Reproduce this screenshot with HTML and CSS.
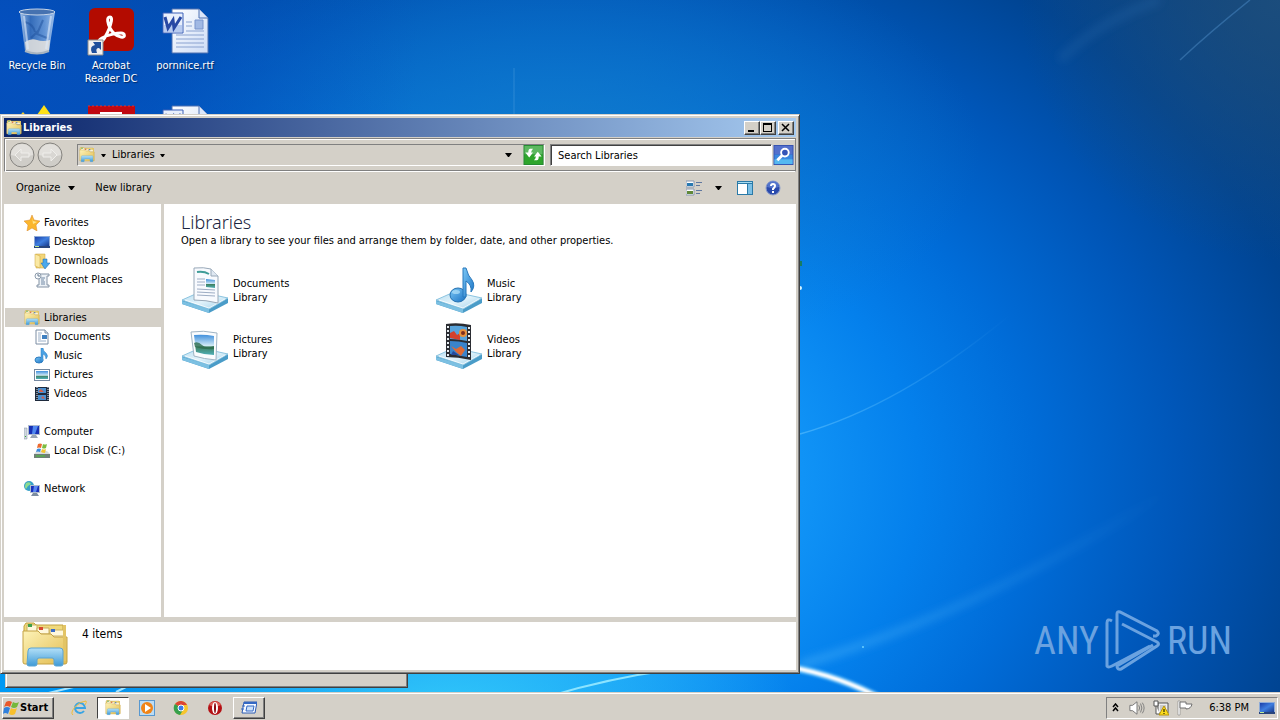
FILE: index.html
```html
<!DOCTYPE html>
<html lang="en">
  <head>
    <meta charset="UTF-8" />
    <meta name="viewport" content="width=device-width, initial-scale=1.0" />
    <title>Libraries</title>
    <link rel="stylesheet" href="styles.css">
  </head>
  <body>
    <!-- icon sprite -->
    <svg class="sprite" aria-hidden="true">
      <defs>
        <linearGradient id="gFolder" x1="0" y1="0" x2="1" y2="1">
          <stop offset="0" stop-color="#fdf3b8" /><stop offset="1" stop-color="#e2bb4e" />
        </linearGradient>
        <linearGradient id="gBlue" x1="0" y1="0" x2="0" y2="1">
          <stop offset="0" stop-color="#b4e0f8" /><stop offset="1" stop-color="#3f9ad6" />
        </linearGradient>
        <linearGradient id="gTray" x1="0" y1="0" x2="1" y2="1">
          <stop offset="0" stop-color="#b5dcf0" /><stop offset="0.5" stop-color="#e2f3fb" /><stop offset="1" stop-color="#9fd0ea" />
        </linearGradient>
        <linearGradient id="gScreen" x1="0" y1="0" x2="1" y2="1">
          <stop offset="0" stop-color="#1b3fa8" /><stop offset="0.5" stop-color="#3f7fe0" /><stop offset="1" stop-color="#173a8c" />
        </linearGradient>
        <linearGradient id="gNote" x1="0" y1="0" x2="1" y2="1">
          <stop offset="0" stop-color="#7cc8f6" /><stop offset="1" stop-color="#1a72c4" />
        </linearGradient>
        <linearGradient id="gPaper" x1="0" y1="0" x2="1" y2="1">
          <stop offset="0" stop-color="#ffffff" /><stop offset="1" stop-color="#cddcf6" />
        </linearGradient>
        <linearGradient id="gSky" x1="0" y1="0" x2="0" y2="1">
          <stop offset="0" stop-color="#3f8fdc" /><stop offset="0.55" stop-color="#d4ecf6" /><stop offset="0.6" stop-color="#3f8060" /><stop offset="1" stop-color="#4fb0b8" />
        </linearGradient>
        <linearGradient id="gBin" x1="0" y1="0" x2="1" y2="0">
          <stop offset="0" stop-color="#b8d0ee" stop-opacity="0.9" /><stop offset="0.3" stop-color="#4878b8" stop-opacity="0.7" /><stop offset="0.7" stop-color="#88b0e0" stop-opacity="0.7" /><stop offset="1" stop-color="#b0ccf0" stop-opacity="0.9" />
        </linearGradient>
      </defs>

      <symbol id="i-libraries" viewBox="0 2 48 48">
        <path d="M3 6 5 3h8l2 2h27v8H3z" fill="#f0d97c" stroke="#c0a040" />
        <path d="M6 5h10v8H6z" fill="#fff8dc" stroke="#c9b060" /><path d="M7 4h4v3H7z" fill="#3fa04c" />
        <path d="M16 8h12v6H16z" fill="#fff8dc" stroke="#c9b060" /><path d="M18 7h4v3h-4z" fill="#d84a30" />
        <path d="M29 10h14v6H29z" fill="#fff8dc" stroke="#c9b060" /><path d="M30 9h4v3h-4z" fill="#3a6cc8" />
        <path d="M2 11h15l3 3h10l3 3h13v25q0 2-2 2H4q-2 0-2-2z" fill="url(#gFolder)" stroke="#c4a245" />
        <path d="M42 5h3v36h-3z" fill="#e3c465" />
        <path d="M7 31q0-3 3-3h29q3 0 3 3v13q0 2-2 2h-5q-2 0-2-2v-4q0-2-2-2H18q-2 0-2 2v4q0 2-2 2H8q-2 0-2-2z" fill="url(#gBlue)" stroke="#5aa4d4" />
      </symbol>

      <symbol id="i-tray" viewBox="0 0 48 48">
        <path d="M1 34v4l27 9 19-10v-5z" fill="#4a9cc8" />
        <path d="M1 34 19 26l28 6-19 11z" fill="url(#gTray)" stroke="#8cc4e0" />
        <path d="M1 35v3l27 9v-4z" fill="#7cc0e2" />
        <path d="M4 34l24 8 16-9" fill="none" stroke="#fff" stroke-opacity="0.7" />
      </symbol>

      <symbol id="i-lib-documents" viewBox="0 0 48 48">
        <use href="#i-tray" />
        <path d="M13 2q10-1 17 1l7 7v27q-12-3-24-3z" fill="#f8fafe" stroke="#98a8b8" />
        <path d="M30 3v7h7" fill="#dfe8f2" stroke="#98a8b8" />
        <path d="M16 6q7-1 12 2" fill="none" stroke="#3f9c98" stroke-width="2" />
        <path d="M16 13h8M16 16h8M16 19h8M16 23l18 1M16 26l18 1M16 29l18 1" stroke="#9cacc4" />
        <path d="M25 13l9 1v8l-9-1z" fill="url(#gSky)" />
      </symbol>
      <symbol id="i-lib-pictures" viewBox="0 0 48 48">
        <use href="#i-tray" />
        <path d="M10 10q12-2 26 1l-1 27q-12-1-22-4z" fill="#fafcfe" stroke="#a0b4c4" />
        <path d="M13 13q10-1 20 1v19q-9 0-18-3z" fill="url(#gSky)" />
        <path d="M13 21q4-2 8 2t12 1v3q-9 1-19-2z" fill="#2c6c4c" opacity="0.8" />
      </symbol>
      <symbol id="i-lib-music" viewBox="0 0 48 48">
        <use href="#i-tray" />
        <ellipse cx="23" cy="29" rx="8" ry="7" fill="url(#gNote)" stroke="#2370b0" />
        <path d="M28 2h3q2 8 6 12 4 6-1 12 1-7-5-11v16h-3z" fill="url(#gNote)" stroke="#2878bc" />
        <ellipse cx="21" cy="26" rx="4" ry="2" fill="#b4e2fa" opacity="0.7" />
      </symbol>
      <symbol id="i-lib-videos" viewBox="0 0 48 48">
        <use href="#i-tray" />
        <path d="M11 2q12-2 25 1v35q-13-3-25-3z" fill="#2b2d33" />
        <path d="M15 4q8-1 17 1v14q-9-2-17-2z" fill="#58a4dc" /><path d="M15 19q9 0 17 2v14l-17-3z" fill="#3a84cc" />
        <path d="M15 11l4-2 3 4 3-2v7l-10-2z" fill="#d4412c" />
        <circle cx="28" cy="11" r="4" fill="#e8923c" /><circle cx="28" cy="11" r="2" fill="#7c3020" />
        <path d="M16 24l5 3 5-3 4 4-4 6-5-4z" fill="#e06a34" /><path d="M18 29l6 4h-8z" fill="#244a9c" />
        <path d="M13 4v31M34 5v32" stroke="#e8eef2" stroke-width="2" stroke-dasharray="2 2" />
      </symbol>

      <symbol id="i-star" viewBox="0 0 16 16">
        <path d="M8 0l2 5 6 1-4 4 1 6-5-3-5 3 1-6-4-4 6-1z" fill="#fbb62e" stroke="#d8862a" stroke-width="0.5" />
        <path d="M8 2l1 4 4 1-4 2z" fill="#ffe48a" />
      </symbol>
      <symbol id="i-desktop" viewBox="0 0 16 16">
        <path d="M0 2h16v11H0z" fill="#8facd8" /><path d="M1 3h14v9H1z" fill="url(#gScreen)" />
        <path d="M0 12h16v2H0z" fill="#28457c" /><path d="M1 12h4v1H1z" fill="#c0ec90" />
      </symbol>
      <symbol id="i-downloads" viewBox="0 0 16 16">
        <path d="M2 1h9v14H2z" fill="#f3d67a" stroke="#c8a038" stroke-width="0.5" /><path d="M1 1l5 2v12l-5-2z" fill="#fae9a4" stroke="#c8a038" stroke-width="0.5" />
        <path d="M9 6h4v4h3l-5 6-4-6h2z" fill="#4aa8ec" stroke="#1c66ae" stroke-width="0.5" />
      </symbol>
      <symbol id="i-recent" viewBox="0 0 16 16">
        <path d="M5 2h10v2h-2v9h2v2H3v-2h2z" fill="#edf2f7" stroke="#8493a5" />
        <path d="M7 6h4M7 8h3M7 10h4M7 12h4" stroke="#7088a4" />
        <circle cx="4" cy="4" r="3" fill="#f7fafc" stroke="#8d9bab" /><path d="M4 2v2h2" fill="none" stroke="#657890" />
      </symbol>
      <symbol id="i-documents" viewBox="0 0 16 16">
        <path d="M2 1h9l3 3v11H2z" fill="#fff" stroke="#7c8ea4" /><path d="M11 1v3h3" fill="#dce6f0" stroke="#7c8ea4" />
        <path d="M4 4h4M4 6h3M4 8h3M4 10h3M4 12h8" stroke="#9cb0c8" /><path d="M8 6h5v4H8z" fill="#3f80c0" />
      </symbol>
      <symbol id="i-music" viewBox="0 0 16 16">
        <ellipse cx="5" cy="12" rx="4" ry="3" fill="url(#gNote)" stroke="#2d7cc0" />
        <path d="M7 0h2q0 3 3 5 3 3 0 6 0-4-3-5v7H7z" fill="#4ba2e4" stroke="#2d7cc0" stroke-width="0.5" />
      </symbol>
      <symbol id="i-pictures" viewBox="0 0 16 16">
        <path d="M0 2h16v12H0z" fill="#7488a0" /><path d="M1 3h14v10H1z" fill="#fff" /><path d="M2 4h12v8H2z" fill="url(#gSky)" />
      </symbol>
      <symbol id="i-videos" viewBox="0 0 16 16">
        <path d="M1 1h14v14H1z" fill="#1e2a3c" /><path d="M4 2h8v5H4zM4 9h8v5H4z" fill="#4a90d0" />
        <path d="M5 5l2-2 3 3H5zM7 12l2-2 2 3z" fill="#d4604a" />
        <path d="M3 1v14M14 1v14" stroke="#e8eef4" stroke-width="1" stroke-dasharray="1 1" />
      </symbol>
      <symbol id="i-computer" viewBox="0 0 16 16">
        <path d="M0 4h3v11H0z" fill="#d0d8e0" stroke="#8090a0" stroke-width="0.5" /><path d="M1 12h1v1H1z" fill="#38b030" />
        <path d="M4 1h12v10H4z" fill="#aebace" /><path d="M5 2h10v8H5z" fill="#1730b4" /><path d="M9 2l5 0-3 8H8z" fill="#5088f0" />
        <path d="M8 11h4l2 3H6z" fill="#98a4b4" />
      </symbol>
      <symbol id="i-disk" viewBox="0 0 16 16">
        <path d="M3 8h10l3 3H0z" fill="#d8dee0" /><path d="M0 11h16v4H0z" fill="#718078" /><path d="M2 13h9" stroke="#47c838" />
        <path d="M4 1q2-1 4 0L7 5Q5 4 3 5z" fill="#ec6a30" /><path d="M9 1q2 1 4 0l-1 4q-2 1-4 0z" fill="#7cbc40" />
        <path d="M3 6q2-1 4 0L6 9Q4 8 2 9z" fill="#3c8ce0" /><path d="M8 6q2 1 4 0l-1 4q-2 0-4-1z" fill="#f4c430" />
      </symbol>
      <symbol id="i-network" viewBox="0 0 16 16">
        <circle cx="5" cy="5" r="5" fill="#37a0c8" /><path d="M2 2q4-2 5 1l-3 2-2 3Q0 6 2 2z" fill="#8cdc90" />
        <path d="M6 4h10v8H6z" fill="#b0bccc" /><path d="M7 5h8v6H7z" fill="#1a30bc" /><path d="M10 5h4l-2 6h-3z" fill="#5a88f0" />
        <path d="M9 12h4l2 3H7z" fill="#7c8ca0" />
      </symbol>

      <symbol id="i-back" viewBox="0 0 26 26">
        <circle cx="13" cy="13" r="12" fill="#cfcdc8" stroke="#85837f" />
        <path d="M2 13a11 11 0 0 1 22 0q-11 3-22 0z" fill="#e2e0dc" />
        <path d="M12 7l-6 6 6 6v-4h8v-4h-8z" fill="#d9d7d3" stroke="#efeeeb" />
      </symbol>
      <symbol id="i-refresh" viewBox="0 0 21 21">
        <path d="M0 0h21v21H0z" fill="#258a32" /><path d="M1 1h19v9H1z" fill="#5cb860" /><path d="M1 10h19v10H1z" fill="#2fa52c" />
        <path d="M10 4H7q-2 0-2 4H2l4 5 4-5H8q0-2 2-4zM11 16h3q2 0 2-4h3l-4-5-4 5h2q0 2-2 4z" fill="#fff" />
      </symbol>
      <symbol id="i-search" viewBox="0 0 21 21">
        <path d="M0 0h21v21H0z" fill="#3652b0" /><path d="M1 1h19v9H1z" fill="#5470cc" /><path d="M1 10h19v10H1z" fill="#3a88e0" /><path d="M1 15h19v5H1z" fill="#55b8f0" />
        <circle cx="12" cy="8" r="4" fill="#3454b8" stroke="#fff" stroke-width="2" /><path d="M9 11l-5 5" stroke="#fff" stroke-width="3" />
      </symbol>
      <symbol id="i-views" viewBox="0 0 16 16">
        <path d="M0 1h8v6H0zM0 9h8v6H0z" fill="#fff" stroke="#8898b0" /><path d="M1 3h6v3H1z" fill="#2878b0" /><path d="M1 11h6v3H1z" fill="#608838" />
        <path d="M10 2.500h6M10 5.500h4M10 10.500h6M10 13.500h4" stroke="#6078a0" />
      </symbol>
      <symbol id="i-pane" viewBox="0 0 16 16">
        <path d="M0 1h16v14H0z" fill="#2a7aa8" /><path d="M1 4h9v10H1z" fill="#fff" /><path d="M11 4h4v10h-4z" fill="#7cc0e6" /><path d="M1 2h14v1H1z" fill="#a8dcf0" />
      </symbol>
      <symbol id="i-help" viewBox="0 0 16 16">
        <circle cx="8" cy="8" r="7" fill="#2a4aac" stroke="#8a9ccc" /><path d="M2 7a6 6 0 0 1 12 0q-6 2-12 0z" fill="#6484d8" opacity="0.7" />
        <path d="M6 6q0-2 2-2t2 2q0 1-2 3v1" fill="none" stroke="#fff" stroke-width="2" /><path d="M7 11h2v2H7z" fill="#fff" />
      </symbol>

      <symbol id="i-bin" viewBox="0 0 48 48">
        <path d="M7 4l5 39q12 6 24 0l6-39z" fill="url(#gBin)" />
        <path d="M12 34q6-4 12-2t13 0l-1 11q-12 5-23 0z" fill="#e8e4de" opacity="0.85" />
        <path d="M12 14q8 2 10 10M30 12l-6 14 10 4M18 30l8-8" fill="none" stroke="#1d4f9c" stroke-width="2" opacity="0.5" />
        <path d="M11 8l4 33M38 8l-5 33" stroke="#dce9fa" stroke-width="2" opacity="0.6" />
        <ellipse cx="24" cy="4" rx="18" ry="3" fill="#4672b0" stroke="#c8d6e8" stroke-width="1" />
        <path d="M12 43q12 5 24 0" fill="none" stroke="#a8b4c0" stroke-width="2" />
      </symbol>
      <symbol id="i-acrobat" viewBox="0 0 48 48">
        <rect x="2" width="45" height="43" rx="6" fill="#b30b00" />
        <path d="M23 9c-4 0-2 7 0 11s6 8 11 9 4-4 0-4-14 2-19 5-3 5-1 4 6-8 8-13 4-12 1-12z" fill="none" stroke="#fff" stroke-width="3" />
        <path d="M1 32h15v15H1z" fill="#f0f0f0" stroke="#8c8c8c" />
        <path d="M5 45q-3-7 3-8l-2-3h8v8l-2-2q-4 0-2 5z" fill="#1f4f9c" />
      </symbol>
      <symbol id="i-word" viewBox="0 0 48 48">
        <path d="M11 1h27l9 9v35H11z" fill="url(#gPaper)" stroke="#4f70b0" /><path d="M38 1v9h9" fill="#dbe6fa" stroke="#4f70b0" />
        <path d="M25 14h6M25 18h6M15 27h28M15 31h28M15 35h28M15 39h28M25 23h18" stroke="#8aa2d0" />
        <path d="M34 12h8v9h-8z" fill="#a0b8e4" stroke="#7894cc" />
        <path d="M2 5h20v20H2z" fill="#e8effc" stroke="#3c60b8" /><path d="M3 17h18v7H3z" fill="#b8cbf0" />
        <path d="M4 9l3 11 5-8 1 8 7-11" fill="none" stroke="#2848a4" stroke-width="3" />
      </symbol>
      <symbol id="i-yellow" viewBox="0 0 48 48">
        <path d="M31 0l14 20H17z" fill="#ffe016" /><path d="M10 7l8 9H2z" fill="#f4cc20" />
      </symbol>
      <symbol id="i-red" viewBox="0 0 48 48">
        <path d="M1 1h47v45H1z" fill="#c00810" /><path d="M1 1h47" stroke="#e03030" stroke-dasharray="2 2" /><path d="M13 7h22v30H13z" fill="#fff" />
      </symbol>

      <symbol id="i-start" viewBox="0 0 17 16">
        <path d="M3 2q3-2 6 0L7 7Q4 5 1 7z" fill="#e8582c" /><path d="M10 2q3 2 6 0l-2 5q-3 2-6 0z" fill="#74b83c" />
        <path d="M1 8q3-2 6 0l-2 6q-3-2-5 0z" fill="#3080dc" /><path d="M8 8q3 2 6 0l-2 6q-3 2-6 0z" fill="#f8c02c" />
      </symbol>
      <symbol id="i-ie" viewBox="0 0 16 16">
        <path d="M13 11A5 5 0 1 1 14 8H5" fill="none" stroke="#38a4e4" stroke-width="2" />
        <path d="M2 15Q-1 13 4 7T15 1q1 1-1 4" fill="none" stroke="#f0bc38" stroke-width="1" />
      </symbol>
      <symbol id="i-player" viewBox="0 0 16 16">
        <path d="M0 0h16v16H0z" fill="#5898d0" /><path d="M1 1h14v14H1z" fill="#bcdcf4" />
        <circle cx="8" cy="8" r="6" fill="#f08418" /><path d="M6 4l6 4-6 4z" fill="#fff" />
      </symbol>
      <symbol id="i-chrome" viewBox="0 0 16 16">
        <circle cx="8" cy="8" r="7" fill="#f6c52c" /><path d="M8 8L2 4a7 7 0 0 1 12 1H8z" fill="#dc4434" />
        <path d="M8 8L2 4a7 7 0 0 0 5 11l3-5z" fill="#36a04c" /><circle cx="8" cy="8" r="3" fill="#3c7ce8" stroke="#fff" />
      </symbol>
      <symbol id="i-opera" viewBox="0 0 16 16">
        <circle cx="8" cy="8" r="7" fill="#b41014" /><path d="M2 5a7 7 0 0 1 12 0q-6 3-12 0z" fill="#e06058" /><ellipse cx="8" cy="8" rx="3" ry="6" fill="#fff" /><ellipse cx="8" cy="8" rx="1" ry="5" fill="#8a0a10" />
      </symbol>
      <symbol id="i-run" viewBox="0 0 16 16">
        <path d="M3 2h13l-2 11H1z" fill="#f6faff" stroke="#2c5cb4" /><path d="M3 2h13v2H3z" fill="#3468c4" /><path d="M6 6h7l-1 5H5z" fill="#cce0f8" stroke="#3468c4" /><path d="M1 6h3M0 9h3" stroke="#3468c4" />
      </symbol>
      <symbol id="i-speaker" viewBox="0 0 18 16">
        <path d="M1 5h3l5-4v14l-5-4H1z" fill="#fff" stroke="#6c6c6c" /><path d="M11 5q2 3 0 6M13 3q3 5 0 10M15 2q4 6 0 12" fill="none" stroke="#777" />
      </symbol>
      <symbol id="i-net-warn" viewBox="0 0 16 16">
        <path d="M5 3h10v10H5z" fill="#eee" stroke="#555" /><path d="M7 5h6v6H7z" fill="#c8c8c8" />
        <path d="M1 1h4v5H1zM3 6v8h4" fill="#fff" stroke="#555" />
        <path d="M11 6l5 9H6z" fill="#fcdc1c" stroke="#b89408" /><path d="M11 9v3M11 13v1" stroke="#000" />
      </symbol>
      <symbol id="i-flag" viewBox="0 0 16 16">
        <path d="M1 1h2v14H1z" fill="#fff" stroke="#707070" stroke-width="0.5" /><path d="M3 2h6v2h6q-1 5-6 5V8H3z" fill="#fff" stroke="#707070" />
      </symbol>
      <symbol id="i-caret" viewBox="0 0 7 4"><path d="M0 0h7L4 4H3z" /></symbol>
      <symbol id="i-caret-sm" viewBox="0 0 5 3"><path d="M0 0h5L3 3H2z" /></symbol>
    </svg>

    <div class="desktop">
      <svg class="wallpaper" viewBox="0 0 1280 720" preserveAspectRatio="none" aria-hidden="true">
        <defs>
          <radialGradient id="glow" gradientUnits="userSpaceOnUse" cx="0" cy="0" r="1" gradientTransform="translate(560 480) scale(900 716)">
            <stop offset="0" stop-color="#1ea4fa" /><stop offset="0.27" stop-color="#1093f6" />
            <stop offset="0.4" stop-color="#0480ec" /><stop offset="0.53" stop-color="#006cd8" /><stop offset="0.69" stop-color="#0056b8" />
            <stop offset="0.85" stop-color="#004492" /><stop offset="1" stop-color="#08407f" />
          </radialGradient>
          <radialGradient id="cyan" gradientUnits="userSpaceOnUse" cx="0" cy="0" r="1" gradientTransform="translate(440 720) scale(360 160)">
            <stop offset="0" stop-color="#34ccfa" /><stop offset="1" stop-color="#34ccfa" stop-opacity="0" />
          </radialGradient>
          <radialGradient id="corner" gradientUnits="userSpaceOnUse" cx="0" cy="720" r="400">
            <stop offset="0" stop-color="#00a0fa" /><stop offset="1" stop-color="#00a0fa" stop-opacity="0" />
          </radialGradient>
          <radialGradient id="topleft" gradientUnits="userSpaceOnUse" cx="0" cy="40" r="420">
            <stop offset="0" stop-color="#0450c0" /><stop offset="1" stop-color="#0450c0" stop-opacity="0" />
          </radialGradient>
          <radialGradient id="teal" gradientUnits="userSpaceOnUse" cx="0" cy="0" r="1" gradientTransform="translate(560 150) scale(420 220)">
            <stop offset="0" stop-color="#147cc6" stop-opacity="0.8" /><stop offset="1" stop-color="#147cc6" stop-opacity="0" />
          </radialGradient>
          <radialGradient id="haze" gradientUnits="userSpaceOnUse" cx="1280" cy="0" r="260">
            <stop offset="0" stop-color="#20507c" stop-opacity="0.8" /><stop offset="1" stop-color="#20507c" stop-opacity="0" />
          </radialGradient>
          <linearGradient id="ray" x1="0" y1="0" x2="1" y2="0">
            <stop offset="0" stop-color="#6cc8ff" stop-opacity="0.5" /><stop offset="1" stop-color="#6cc8ff" stop-opacity="0" />
          </linearGradient>
          <filter id="soft"><feGaussianBlur stdDeviation="1" /></filter>
          <filter id="softer"><feGaussianBlur stdDeviation="4" /></filter>
        </defs>
        <path d="M0 0h1280v720H0z" fill="url(#glow)" />
        <path d="M0 0h1280v720H0z" fill="url(#teal)" />
        <path d="M0 0h1280v720H0z" fill="url(#topleft)" />
        <path d="M0 0h1280v720H0z" fill="url(#corner)" />
        <path d="M0 0h1280v720H0z" fill="url(#cyan)" />
        <path d="M0 0h1280v720H0z" fill="url(#haze)" />
        <path d="M800 434Q900 406 1010 315" fill="none" stroke="url(#ray)" stroke-width="1.5" />
        <path d="M800 665Q980 612 1170 490" fill="none" stroke="url(#ray)" stroke-width="8" filter="url(#softer)" opacity="0.7" />
        <path d="M1180 60Q1210 32 1250 0" fill="none" stroke="#3c78b0" stroke-width="1.5" opacity="0.7" />
        <path d="M1060 60Q1100 20 1160 0" fill="none" stroke="#2a6aac" stroke-width="9" filter="url(#softer)" opacity="0.3" />
        <path d="M514 68v46" stroke="#4c9cdc" opacity="0.5" />
        <path d="M790 667Q840 676 884 700" fill="none" stroke="#8cd8ff" stroke-width="8" filter="url(#soft)" opacity="0.5" />
        <path d="M790 667Q840 676 884 700" fill="none" stroke="#fff" stroke-width="4" filter="url(#soft)" />
        <path d="M550 696Q610 678 670 670" fill="none" stroke="#8ce4ff" stroke-width="2" />
        <path d="M36 696l50-12M116 692l16-8" stroke="#a4e4ff" stroke-width="2" />
        <path d="M800 261h2v5h-2z" fill="#187c60" />
        <circle cx="800" cy="288" r="2" fill="#d4f4ff" /><circle cx="863" cy="647" r="1" fill="#6cd0ff" />
      </svg>

      <div class="shortcuts">
        <a class="shortcut" href="#"><svg class="icon-lg"><use href="#i-bin" /></svg>Recycle Bin</a>
        <a class="shortcut" href="#"><svg class="icon-lg"><use href="#i-acrobat" /></svg>Acrobat Reader DC</a>
        <a class="shortcut" href="#"><svg class="icon-lg"><use href="#i-word" /></svg>pornnice.rtf</a>
        <a class="shortcut" href="#" aria-label="Shortcut"><svg class="icon-lg"><use href="#i-yellow" /></svg></a>
        <a class="shortcut" href="#" aria-label="Shortcut"><svg class="icon-lg"><use href="#i-red" /></svg></a>
        <a class="shortcut" href="#" aria-label="Document"><svg class="icon-lg"><use href="#i-word" /></svg></a>
      </div>

      <div class="watermark">
        <span>ANY</span>
        <svg class="watermark__mark" viewBox="0 0 56 62" aria-hidden="true">
          <path d="M7 11q-5-3-5 2v43q1 2 5 0l38-20" />
          <path d="M12 44V4q0-3 3-2l37 19q3 3-1 5h-3" />
          <path d="M17 14l35 18q3 2 0 4L16 59q-4 1-4-3l36-21" />
        </svg>
        <span>RUN</span>
      </div>

      <div class="window window--behind"></div>

      <main class="window window--front">
        <header class="titlebar">
          <svg class="icon"><use href="#i-libraries" /></svg>
          <span class="titlebar__text">Libraries</span>
          <button class="titlebar__btn" aria-label="Minimize"><svg viewBox="0 0 12 10"><path d="M2 7h6v2H2z" /></svg></button>
          <button class="titlebar__btn" aria-label="Maximize"><svg viewBox="0 0 12 10"><path d="M1 0h9v9H1zM2 2v6h7V2z" fill-rule="evenodd" /></svg></button>
          <button class="titlebar__btn titlebar__btn--close" aria-label="Close"><svg viewBox="0 0 12 10"><path d="M2 1l7 7M9 1L2 8" stroke="#000" stroke-width="1.500" /></svg></button>
        </header>

        <div class="navbar">
          <button class="round-btn" aria-label="Back"><svg><use href="#i-back" /></svg></button>
          <button class="round-btn round-btn--forward" aria-label="Forward"><svg><use href="#i-back" /></svg></button>
          <div class="address">
            <svg class="icon"><use href="#i-libraries" /></svg>
            <button class="crumb" aria-label="Root"><svg class="caret-sm"><use href="#i-caret-sm" /></svg></button>
            <button class="crumb">Libraries <svg class="caret-sm"><use href="#i-caret-sm" /></svg></button>
            <button class="crumb crumb--history" aria-label="Previous locations"><svg class="caret"><use href="#i-caret" /></svg></button>
            <button class="square-btn" aria-label="Refresh"><svg><use href="#i-refresh" /></svg></button>
          </div>
          <input class="search" type="text" placeholder="Search Libraries" aria-label="Search Libraries" />
          <button class="square-btn" aria-label="Search"><svg><use href="#i-search" /></svg></button>
        </div>

        <div class="toolbar">
          <button class="tool">Organize <svg class="caret"><use href="#i-caret" /></svg></button>
          <button class="tool">New library</button>
          <button class="tool tool--views" aria-label="Change your view"><svg class="icon"><use href="#i-views" /></svg><svg class="caret"><use href="#i-caret" /></svg></button>
          <button class="tool" aria-label="Show the preview pane"><svg class="icon"><use href="#i-pane" /></svg></button>
          <button class="tool" aria-label="Get help"><svg class="icon"><use href="#i-help" /></svg></button>
        </div>

        <div class="panes">
          <nav class="tree">
            <div class="tree__group">
              <a class="tree__item" href="#"><svg class="icon"><use href="#i-star" /></svg>Favorites</a>
              <a class="tree__item tree__item--child" href="#"><svg class="icon"><use href="#i-desktop" /></svg>Desktop</a>
              <a class="tree__item tree__item--child" href="#"><svg class="icon"><use href="#i-downloads" /></svg>Downloads</a>
              <a class="tree__item tree__item--child" href="#"><svg class="icon"><use href="#i-recent" /></svg>Recent Places</a>
            </div>
            <div class="tree__group">
              <a class="tree__item active" href="#"><svg class="icon"><use href="#i-libraries" /></svg>Libraries</a>
              <a class="tree__item tree__item--child" href="#"><svg class="icon"><use href="#i-documents" /></svg>Documents</a>
              <a class="tree__item tree__item--child" href="#"><svg class="icon"><use href="#i-music" /></svg>Music</a>
              <a class="tree__item tree__item--child" href="#"><svg class="icon"><use href="#i-pictures" /></svg>Pictures</a>
              <a class="tree__item tree__item--child" href="#"><svg class="icon"><use href="#i-videos" /></svg>Videos</a>
            </div>
            <div class="tree__group">
              <a class="tree__item" href="#"><svg class="icon"><use href="#i-computer" /></svg>Computer</a>
              <a class="tree__item tree__item--child" href="#"><svg class="icon"><use href="#i-disk" /></svg>Local Disk (C:)</a>
            </div>
            <div class="tree__group">
              <a class="tree__item" href="#"><svg class="icon"><use href="#i-network" /></svg>Network</a>
            </div>
          </nav>

          <section class="content">
            <h1 class="content__title">Libraries</h1>
            <p class="content__hint">Open a library to see your files and arrange them by folder, date, and other properties.</p>
            <div class="libs">
              <a class="lib" href="#"><svg class="icon-lg"><use href="#i-lib-documents" /></svg><span class="lib__name">Documents<br>Library</span></a>
              <a class="lib" href="#"><svg class="icon-lg"><use href="#i-lib-music" /></svg><span class="lib__name">Music<br>Library</span></a>
              <a class="lib" href="#"><svg class="icon-lg"><use href="#i-lib-pictures" /></svg><span class="lib__name">Pictures<br>Library</span></a>
              <a class="lib" href="#"><svg class="icon-lg"><use href="#i-lib-videos" /></svg><span class="lib__name">Videos<br>Library</span></a>
            </div>
          </section>
        </div>

        <footer class="details">
          <svg class="icon-lg"><use href="#i-libraries" /></svg>
          <span class="details__text">4 items</span>
        </footer>
      </main>

      <div class="taskbar">
        <button class="start"><svg><use href="#i-start" /></svg>Start</button>
        <button class="task" aria-label="Internet Explorer"><svg class="icon"><use href="#i-ie" /></svg></button>
        <button class="task task--pressed" aria-label="Windows Explorer"><svg class="icon"><use href="#i-libraries" /></svg></button>
        <button class="task" aria-label="Media Player"><svg class="icon"><use href="#i-player" /></svg></button>
        <button class="task" aria-label="Chrome"><svg class="icon"><use href="#i-chrome" /></svg></button>
        <button class="task" aria-label="Opera"><svg class="icon"><use href="#i-opera" /></svg></button>
        <button class="task task--open" aria-label="Run"><svg class="icon"><use href="#i-run" /></svg></button>
        <div class="tray">
          <button class="tray__btn tray__btn--more" aria-label="Show hidden icons"><svg class="chevrons" viewBox="0 0 7 9"><path d="M1 4l2.500-3L6 4M1 8l2.500-3L6 8" fill="none" stroke="#000" stroke-width="1.500" /></svg></button>
          <button class="tray__btn" aria-label="Volume"><svg class="icon"><use href="#i-speaker" /></svg></button>
          <button class="tray__btn" aria-label="Network"><svg class="icon"><use href="#i-net-warn" /></svg></button>
          <button class="tray__btn" aria-label="Action Center"><svg class="icon"><use href="#i-flag" /></svg></button>
          <time class="tray__clock">6:38 PM</time>
          <button class="tray__btn" aria-label="Show desktop"><svg class="icon"><use href="#i-desktop" /></svg></button>
        </div>
      </div>
    </div>
  </body>
</html>
```
FILE: styles.css
```css
* {
  box-sizing: border-box;
}

body {
  margin: 0;
  font-family: Tahoma, "DejaVu Sans Condensed", "Noto Sans", sans-serif;
  font-size: 11px;
  line-height: 14px;
  color: #000;
}

a {
  color: inherit;
  text-decoration: none;
}

button {
  display: flex;
  align-items: center;
  padding: 0;
  border: 0;
  background: none;
  font: inherit;
  color: inherit;
}

svg {
  display: block;
  flex: none;
}

.sprite {
  position: absolute;
  width: 0;
  height: 0;
}

.icon {
  width: 16px;
  height: 16px;
}

.icon-lg {
  width: 48px;
  height: 48px;
}

.caret {
  width: 7px;
  height: 4px;
}

.caret-sm {
  width: 5px;
  height: 3px;
}

.desktop {
  position: relative;
  display: flex;
  flex-direction: column;
  justify-content: space-between;
  height: 100vh;
  overflow: hidden;
}

.wallpaper {
  position: absolute;
  width: 100%;
  height: 100%;
}

/* desktop icons */
.shortcuts {
  position: relative;
  display: grid;
  grid-template-columns: repeat(3, 74px);
  grid-auto-rows: 97px;
  padding-top: 8px;
}

.shortcut {
  display: flex;
  flex-direction: column;
  align-items: center;
  gap: 3px;
  padding: 0 8px;
  line-height: 13px;
  color: #fff;
  text-align: center;
  text-shadow: 1px 1px 1px #002860;
}

.watermark {
  position: absolute;
  right: 48px;
  bottom: 48px;
  display: flex;
  align-items: center;
  gap: 6px;
  font-family: "Roboto Condensed", "Liberation Sans Narrow", Roboto, sans-serif;
  font-size: 38px;
  line-height: 62px;
  color: #6aa2e0;
}

.watermark__mark {
  width: 56px;
  height: 62px;
  fill: none;
  stroke: #6aa2e0;
  stroke-width: 3;
}

/* windows */
.window {
  position: absolute;
  display: flex;
  flex-direction: column;
  padding: 2px;
  border: 1px solid;
  border-color: #d4d0c8 #404040 #404040 #d4d0c8;
  background: #d4d0c8;
  box-shadow: inset 1px 1px #fff, inset -1px -1px #808080;
}

.window--behind {
  left: 5px;
  bottom: 32px;
  width: 403px;
  height: 200px;
}

.window--front {
  top: 114px;
  bottom: 46px;
  left: 0;
  width: 62.5%;
  padding: 3px;
}

.titlebar {
  display: flex;
  align-items: center;
  height: 19px;
  padding: 0 2px;
  background: linear-gradient(to right, #0a246a, #a6caf0);
  color: #fff;
  font-weight: bold;
}

.titlebar__text {
  flex: 1;
  padding-left: 1px;
}

.titlebar__btn {
  justify-content: center;
  width: 16px;
  height: 14px;
  border: 1px solid;
  border-color: #fff #404040 #404040 #fff;
  background: #d4d0c8;
  box-shadow: inset -1px -1px #808080;
}

.titlebar__btn svg {
  width: 12px;
  height: 10px;
}

.titlebar__btn--close {
  margin-left: 2px;
}

.navbar {
  display: flex;
  align-items: center;
  height: 34px;
  margin-top: 1px;
  padding: 0 1px 0 4px;
  border: 1px solid;
  border-color: #808080 #808080 #fff #808080;
  box-shadow: inset 1px 1px #fff, inset 0 -1px #808080;
}

.round-btn {
  width: 26px;
  height: 26px;
  margin-right: 2px;
}

.round-btn svg {
  width: 26px;
  height: 26px;
}

.round-btn--forward {
  transform: scaleX(-1);
}

.address {
  display: flex;
  flex: 1;
  align-items: center;
  height: 22px;
  margin-left: 12px;
  padding-left: 1px;
  border: 1px solid;
  border-color: #808080 #fff #fff #808080;
}

.crumb {
  gap: 5px;
  padding-left: 6px;
}

.crumb--history {
  margin: 0 11px 0 auto;
}

.square-btn,
.square-btn svg {
  width: 21px;
  height: 20px;
}

.search {
  width: 222px;
  height: 22px;
  margin: 0 1px 0 5px;
  padding: 0 7px;
  border: 1px solid;
  border-color: #808080 #fff #fff #808080;
  background: #fff;
  box-shadow: inset 1px 1px #404040;
  font: inherit;
}

.search::placeholder {
  color: #000;
}

.toolbar {
  display: flex;
  align-items: center;
  gap: 12px;
  height: 32px;
  padding: 0 15px 0 12px;
}

.tool {
  gap: 8px;
}

.tool:first-child {
  margin-right: 8px;
}

.tool--views {
  gap: 13px;
  margin: 0 3px 0 auto;
}

.panes {
  display: flex;
  flex: 1;
  min-height: 0;
}

.tree {
  width: 160px;
  padding-top: 9px;
  border-right: 3px solid #d4d0c8;
  background: #fff;
}

.tree__group {
  margin-bottom: 19px;
}

.tree__item {
  display: flex;
  align-items: center;
  gap: 4px;
  height: 19px;
  margin-left: 1px;
  padding-left: 19px;
}

.tree__item--child {
  padding-left: 29px;
}

.tree__item.active {
  background: #d4d0c8;
}

.content {
  flex: 1;
  padding: 6px 17px;
  background: #fff;
}

.content__title {
  margin: 0;
  font-family: "Noto Sans", "Open Sans", sans-serif;
  font-size: 18px;
  font-weight: 300;
  line-height: 24px;
  color: #1a2440;
}

.content__hint {
  margin: 0;
}

.libs {
  display: grid;
  grid-template-columns: repeat(auto-fill, 254px);
  row-gap: 8px;
  margin-top: 18px;
}

.lib {
  display: flex;
  align-items: center;
  gap: 4px;
}

.lib__name {
  padding-top: 2px;
}

.details {
  display: flex;
  height: 53px;
  padding-left: 17px;
  border-top: 5px solid #d4d0c8;
  background: #fff;
}

.details__text {
  padding: 5px 13px;
  font-size: 12px;
}

/* taskbar */
.taskbar {
  position: relative;
  display: flex;
  align-items: center;
  height: 28px;
  padding: 2px 2px 0;
  border-top: 1px solid #d4d0c8;
  background: #d4d0c8;
  box-shadow: inset 0 1px #fff;
}

.start,
.task--open {
  border: 1px solid;
  border-color: #fff #404040 #404040 #fff;
  box-shadow: inset -1px -1px #808080;
}

.start {
  width: 52px;
  height: 22px;
  margin-right: 9px;
  font-weight: bold;
}

.start svg {
  width: 17px;
  height: 16px;
}

.task {
  justify-content: center;
  width: 32px;
  height: 22px;
  margin-right: 2px;
}

.task--pressed {
  border: 1px solid;
  border-color: #404040 #fff #fff #404040;
  background: #fff;
}

.tray {
  display: flex;
  align-items: center;
  gap: 8px;
  height: 22px;
  margin-left: auto;
  padding: 0 2px 0 5px;
  border: 1px solid;
  border-color: #808080 #fff #fff #808080;
}

.tray__btn--more {
  margin-right: 2px;
}

.tray__clock {
  padding: 0 2px 0 8px;
}

.chevrons {
  width: 7px;
  height: 9px;
}
```
